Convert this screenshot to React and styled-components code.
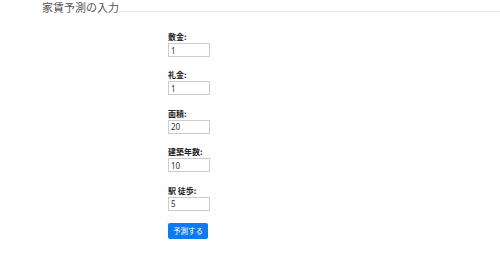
import React from 'react';
import styled, { createGlobalStyle } from 'styled-components';

const GlobalStyle = createGlobalStyle`
  html, body {
    margin: 0;
    padding: 0;
    background: #ffffff;
  }
  body {
    font-family: "Noto Sans CJK JP", "Noto Sans", sans-serif;
  }
`;

const Page = styled.div`
  width: 500px;
  height: 261px;
  overflow: hidden;
`;

const Header = styled.div`
  display: flex;
  align-items: flex-end;
  height: 13px;
`;

const Title = styled.div`
  margin-left: 42px;
  font-size: 11px;
  line-height: 12px;
  color: #555;
  white-space: nowrap;
`;

const Rule = styled.div`
  flex: 1;
  border-bottom: 1px solid #e6e6e6;
  margin-bottom: 1px;
`;

const Form = styled.form`
  display: flex;
  flex-direction: column;
  align-items: flex-start;
  padding: 19px 0 0 168px;
`;

const Group = styled.div`
  display: flex;
  flex-direction: column;
  align-items: flex-start;
  margin-bottom: 13.4px;
`;

const Label = styled.label`
  font-size: 8px;
  line-height: 10px;
  font-weight: bold;
  color: #222;
  margin-bottom: 1px;
`;

const Input = styled.input`
  box-sizing: border-box;
  width: 42px;
  height: 14px;
  margin: 0;
  padding: 0 2px;
  border: 1px solid #cccccc;
  font-family: "Noto Sans", sans-serif;
  font-size: 8px;
  color: #333;
  outline: none;
`;

const Button = styled.button`
  box-sizing: border-box;
  margin-top: -1px;
  width: 40px;
  height: 16px;
  padding: 0;
  border: none;
  border-radius: 2px;
  background: #0a7bf5;
  color: #fff;
  font-family: "Noto Sans CJK JP", sans-serif;
  font-size: 7.5px;
`;

const fields = [
  { label: '敷金:', value: '1' },
  { label: '礼金:', value: '1' },
  { label: '面積:', value: '20' },
  { label: '建築年数:', value: '10' },
  { label: '駅 徒歩:', value: '5' },
];

export default function App() {
  return (
    <Page>
      <GlobalStyle />
      <Header>
        <Title>家賃予測の入力</Title>
        <Rule />
      </Header>
      <Form onSubmit={(e) => e.preventDefault()}>
        {fields.map((f) => (
          <Group key={f.label}>
            <Label>{f.label}</Label>
            <Input defaultValue={f.value} />
          </Group>
        ))}
        <Button type="submit">予測する</Button>
      </Form>
    </Page>
  );
}
